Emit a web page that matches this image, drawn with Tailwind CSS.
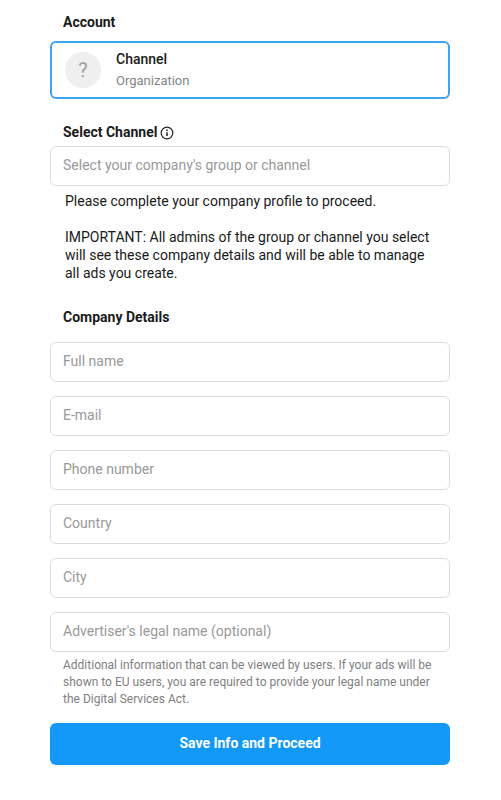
<!DOCTYPE html>
<html lang="en">

<head>
    <meta charset="UTF-8">
    <title>Company Details</title>
    <script src="https://cdn.jsdelivr.net/npm/@tailwindcss/browser@4"></script>
</head>

<body class="bg-white font-['Roboto',sans-serif] text-[14px] text-[#1a1a1a]">

    <div class="w-[400px] ml-[50px] pt-[14px]">
        <h2 class="px-[13px] text-[14px] leading-[17px] font-bold">Account</h2>

        <div class="mt-[10px] h-[58px] flex items-center border-2 border-[#3fa3f0] rounded-[6px] pl-[13px]">
            <div class="w-9 h-9 rounded-full bg-[#efefef] flex items-center justify-center text-[20px] text-[#a0a0a0]">?</div>
            <div class="ml-[15px] pb-[2px]">
                <div class="text-[14px] leading-[20px] font-medium">Channel</div>
                <div class="text-[13px] leading-[18px] mt-[3px] text-[#808488]">Organization</div>
            </div>
        </div>

        <div class="mt-[25px] px-[13px] flex items-center gap-[3px]">
            <h2 class="text-[14px] leading-[17px] font-bold">Select Channel</h2>
            <svg class="w-[14px] h-[14px]" viewBox="0 0 14 14" fill="none" stroke="#222" stroke-width="1.2">
                <circle cx="7" cy="7" r="5.8"></circle>
                <path d="M7 6.2v3.8" stroke-width="1.5"></path>
                <path d="M7 3.6v1.4" stroke-width="1.5"></path>
            </svg>
        </div>

        <input class="mt-[5px] block w-full h-10 px-3 pb-[2px] border border-[#dcdcdc] rounded-[6px] text-[14px] placeholder:text-[#999]" placeholder="Select your company's group or channel">

        <div class="mt-[6px] pl-[15px] pr-4 text-[14px] leading-[18px]">
            <p>Please complete your company profile to proceed.</p>
            <p class="mt-[18px]">IMPORTANT: All admins of the group or channel you select will see these company details and will be able to manage all ads you create.</p>
        </div>

        <h2 class="mt-[27px] px-[13px] text-[14px] leading-[17px] font-bold">Company Details</h2>

        <div class="mt-[16px] flex flex-col gap-[14px]">
            <input class="block w-full h-10 px-3 pb-[2px] border border-[#dcdcdc] rounded-[6px] text-[14px] placeholder:text-[#999]" placeholder="Full name">
            <input class="block w-full h-10 px-3 pb-[2px] border border-[#dcdcdc] rounded-[6px] text-[14px] placeholder:text-[#999]" placeholder="E-mail">
            <input class="block w-full h-10 px-3 pb-[2px] border border-[#dcdcdc] rounded-[6px] text-[14px] placeholder:text-[#999]" placeholder="Phone number">
            <input class="block w-full h-10 px-3 pb-[2px] border border-[#dcdcdc] rounded-[6px] text-[14px] placeholder:text-[#999]" placeholder="Country">
            <input class="block w-full h-10 px-3 pb-[2px] border border-[#dcdcdc] rounded-[6px] text-[14px] placeholder:text-[#999]" placeholder="City">
            <input class="block w-full h-10 px-3 pb-[2px] border border-[#dcdcdc] rounded-[6px] text-[14px] placeholder:text-[#999]" placeholder="Advertiser's legal name (optional)">
        </div>

        <p class="mt-[5px] px-[13px] text-[12px] leading-[17px] text-[#808080]">Additional information that can be viewed by users. If your ads will be shown to EU users, you are required to provide your legal name under the Digital Services Act.</p>

        <button class="mt-[15px] block w-full h-[42px] pb-[2px] rounded-[6px] bg-[#1298f6] text-white text-[14px] font-bold">Save Info and Proceed</button>
    </div>

</body>

</html>
